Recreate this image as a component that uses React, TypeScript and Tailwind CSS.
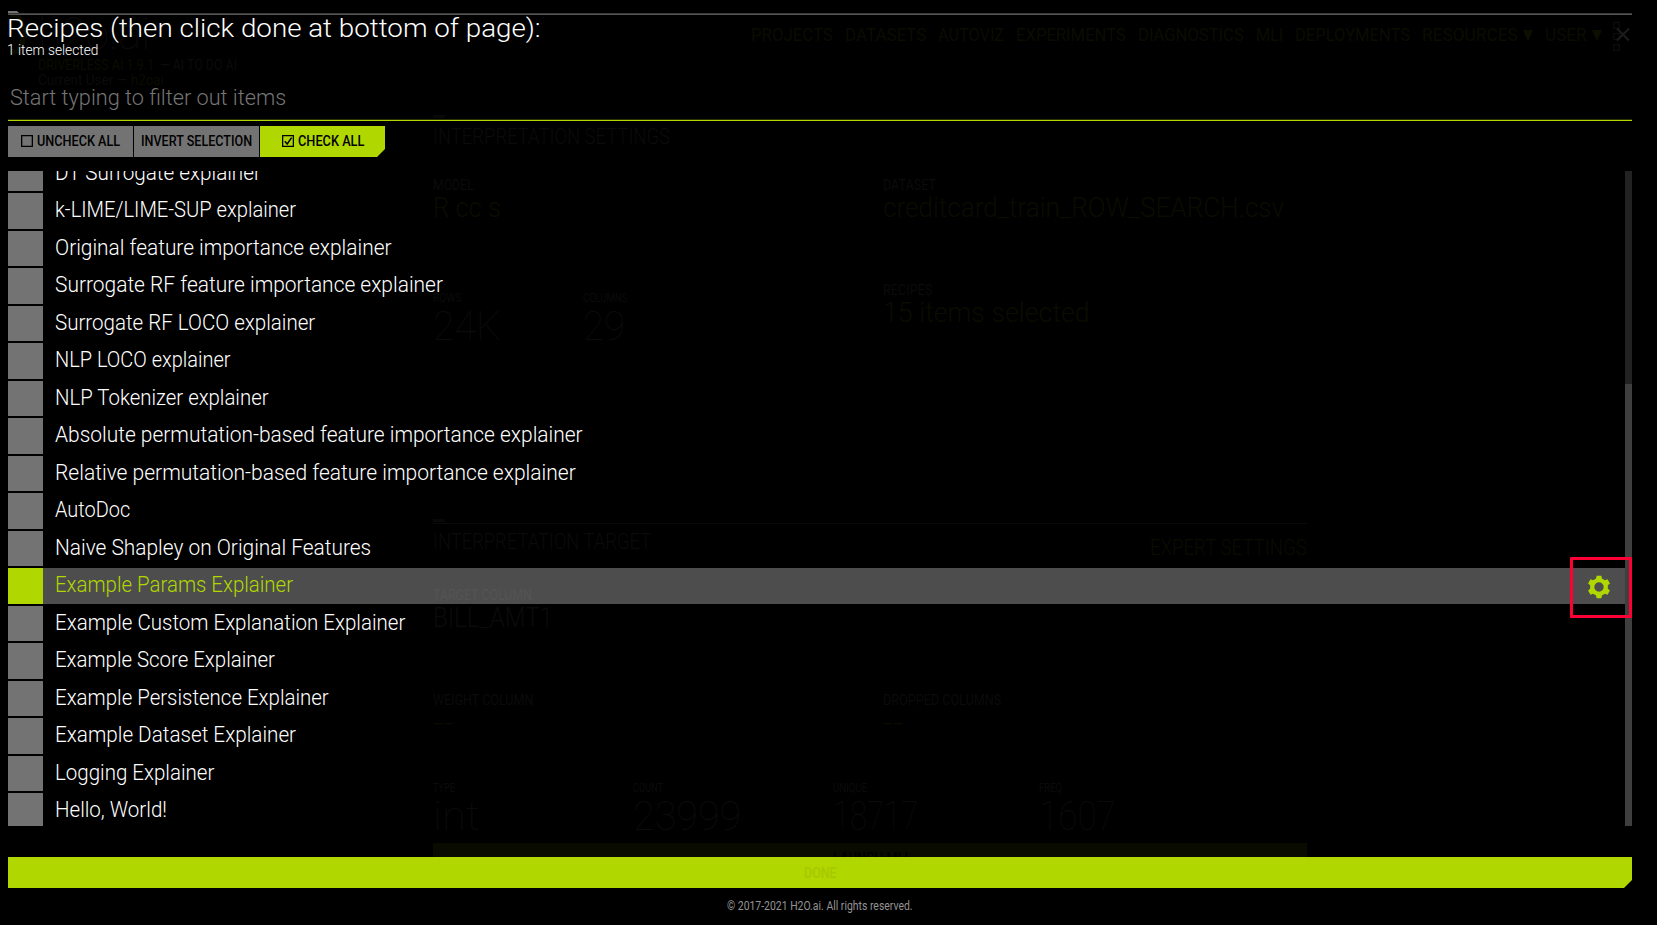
import { useLayoutEffect, useRef, useState } from "react";

/** One line of condensed text, squeezed or stretched horizontally to `w` pixels. */
function Line({ w, className = "", children }: { w: number; className?: string; children: string }) {
  const ref = useRef<HTMLSpanElement>(null);
  const [scale, setScale] = useState(1);
  useLayoutEffect(() => {
    const natural = ref.current?.offsetWidth ?? 0;
    if (natural > 0) setScale(w / natural);
  }, [w]);
  return (
    <div className={`shrink-0 whitespace-nowrap ${className}`} style={{ width: w }}>
      <span ref={ref} className="inline-block origin-left" style={{ transform: `scaleX(${scale})` }}>
        {children}
      </span>
    </div>
  );
}

const items: [string, number][] = [
  ["DT Surrogate explainer", 206],
  ["k-LIME/LIME-SUP explainer", 241],
  ["Original feature importance explainer", 336],
  ["Surrogate RF feature importance explainer", 388],
  ["Surrogate RF LOCO explainer", 260],
  ["NLP LOCO explainer", 176],
  ["NLP Tokenizer explainer", 214],
  ["Absolute permutation-based feature importance explainer", 528],
  ["Relative permutation-based feature importance explainer", 521],
  ["AutoDoc", 75],
  ["Naive Shapley on Original Features", 316],
  ["Example Params Explainer", 238],
  ["Example Custom Explanation Explainer", 350],
  ["Example Score Explainer", 220],
  ["Example Persistence Explainer", 274],
  ["Example Dataset Explainer", 241],
  ["Logging Explainer", 159],
  ["Hello, World!", 112],
];
const SELECTED = 11;

const nav: [string, number, boolean][] = [
  ["PROJECTS", 82, false],
  ["DATASETS", 81, false],
  ["AUTOVIZ", 66, false],
  ["EXPERIMENTS", 110, false],
  ["DIAGNOSTICS", 106, false],
  ["MLI", 27, false],
  ["DEPLOYMENTS", 115, false],
  ["RESOURCES", 96, true],
  ["USER", 42, true],
];

function Field({ label, lw, value, vw, plain }: { label: string; lw: number; value: string; vw: number; plain?: boolean }) {
  return (
    <div className="w-[450px] shrink-0">
      <Line w={lw} className="h-4 text-[14px] leading-4">{label}</Line>
      <Line
        w={vw}
        className={plain ? "h-8 text-[27px] font-light leading-[31px]" : "h-8 text-[27px] font-light leading-[31px] text-[#0b0c00]"}
      >
        {value}
      </Line>
    </div>
  );
}

function Stat({ label, lw, value, vw, className }: { label: string; lw: number; value: string; vw: number; className: string }) {
  return (
    <div className={`shrink-0 ${className}`}>
      <Line w={lw} className="h-4 text-[12px] leading-4">{label}</Line>
      <Line w={vw} className="h-12 text-[41px] font-thin leading-[40px]">{value}</Line>
    </div>
  );
}

function Backdrop() {
  return (
    <div className="absolute inset-0 overflow-hidden text-[#0b0b0b]">
      <div className="flex h-[115px] items-start justify-between">
        <div className="flex pl-2">
          <svg className="mt-[14px] h-10 w-[30px]" viewBox="0 0 30 40" fill="none" stroke="#0b0c00" strokeWidth="5">
            <path d="M2 1h8l8 18-8 19H2" />
          </svg>
          <div className="pt-3">
            <Line w={112} className="h-11 text-[44px] font-thin leading-[44px]">h2o.ai</Line>
            <div className="mt-px flex gap-1.5 text-[14px] leading-4">
              <Line w={116} className="text-[#0b0c00]">DRIVERLESS AI 1.9.1</Line>
              <Line w={77}>— AI TO DO AI</Line>
            </div>
            <div className="flex gap-1 text-[14px] leading-[15px]">
              <Line w={89}>Current User —</Line>
              <Line w={33} className="text-[#0b0c00]">h2oai</Line>
            </div>
          </div>
        </div>
        <div className="flex items-start gap-[12px] pr-[37px] pt-[22px] text-[18px] leading-[25px] text-[#0b0c00]">
          {nav.map(([label, w, menu]) => (
            <div key={label} className="flex items-center">
              <Line w={w}>{label}</Line>
              {menu && (
                <svg className="ml-[5px] mt-0.5 h-[11px] w-[10px]" viewBox="0 0 10 11" fill="#0d0e00">
                  <path d="M0 0h10L5 11z" />
                </svg>
              )}
            </div>
          ))}
          <svg className="-ml-[1px] h-[30px] w-[7px]" viewBox="0 0 7 30" fill="none" stroke="#0c0c0c" strokeWidth="1.3">
            <path d="M.7.7h5.6v5.6H.7zM.7 11.7h5.6v5.6H.7zM.7 22.7h5.6v5.6H.7z" />
          </svg>
        </div>
      </div>

      <div className="ml-[433px] w-[874px]">
        <div className="h-[3px] w-[12px] bg-[#080808]" />
        <Line w={237} className="mt-[6px] h-[26px] text-[21.5px] font-light leading-[26px]">INTERPRETATION SETTINGS</Line>
        <div className="mt-[27px] flex">
          <Field label="MODEL" lw={41} value="R cc s" vw={68} />
          <Field label="DATASET" lw={53} value="creditcard_train_ROW_SEARCH.csv" vw={401} />
        </div>
        <div className="mt-[57px] flex h-[48px]">
          <div className="flex w-[450px] shrink-0 pt-2">
            <Stat className="w-[150px]" label="ROWS" lw={28} value="24K" vw={68} />
            <Stat className="w-[150px]" label="COLUMNS" lw={44} value="29" vw={42} />
          </div>
          <Field label="RECIPES" lw={50} value="15 items selected" vw={207} />
        </div>
        <div className="mt-[189px] h-[3px] w-[12px] bg-[#080808]" />
        <div className="mt-px h-px bg-[#090909]" />
        <div className="flex h-[63px] justify-between pt-1">
          <Line w={218} className="h-[26px] pt-[1px] text-[21.5px] font-light leading-[26px]">INTERPRETATION TARGET</Line>
          <Line w={157} className="pt-[7px] text-[21.5px] font-light leading-[26px] text-[#0b0c00]">EXPERT SETTINGS</Line>
        </div>
        <Field label="TARGET COLUMN" lw={99} value="BILL_AMT1" vw={120} plain />
        <div className="mt-[57px] flex">
          <Field label="WEIGHT COLUMN" lw={100} value="--" vw={20} />
          <Field label="DROPPED COLUMNS" lw={118} value="--" vw={20} />
        </div>
        <div className="mt-[40px] flex h-[63px]">
          <Stat className="w-[200px]" label="TYPE" lw={22} value="int" vw={47} />
          <Stat className="w-[200px]" label="COUNT" lw={30} value="23999" vw={108} />
          <Stat className="w-[206px]" label="UNIQUE" lw={34} value="18717" vw={85} />
          <Stat className="w-[200px]" label="FREQ" lw={23} value="1607" vw={77} />
        </div>
        <div className="flex h-[31px] justify-center bg-[#0a0b00] pt-[6px] text-[14px] font-medium leading-[18px] text-black">
          <Line w={75}>LAUNCH MLI</Line>
        </div>
      </div>
    </div>
  );
}

function Gear() {
  const tooth = (a: number, r: number) => {
    const t = (a * Math.PI) / 180;
    return `${(12 + r * Math.sin(t)).toFixed(2)} ${(12 - r * Math.cos(t)).toFixed(2)}`;
  };
  const outline = [0, 60, 120, 180, 240, 300]
    .map((a) => `${tooth(a - 19, 9)} L${tooth(a - 12, 11.5)} L${tooth(a + 12, 11.5)} L${tooth(a + 19, 9)}`)
    .join(" L");
  return (
    <svg className="mt-0.5 h-6 w-6" viewBox="0 0 24 24" fill="#b1d700" fillRule="evenodd">
      <path d={`M${outline}Z M16.7 12a4.7 4.7 0 1 0-9.4 0a4.7 4.7 0 1 0 9.4 0Z`} />
    </svg>
  );
}

export default function App() {
  return (
    <div className="relative h-[925px] w-[1657px] overflow-hidden bg-black font-['Roboto',sans-serif]">
      <Backdrop />
      <div className="relative flex h-full flex-col pl-2 pr-[25px] pt-[11px]">
        <div className="h-0.5 w-[11px] bg-[#737373] [clip-path:polygon(0_0,82%_0,100%_100%,0_100%)]" />
        <div className="h-0.5 border-t border-[#3a3a3a] bg-[#555555]" />
        <div className="flex justify-between">
          <div>
            <Line w={534} className="-ml-px h-[25px] text-[26.5px] font-light leading-[25px] text-white">
              Recipes (then click done at bottom of page):
            </Line>
            <Line w={91} className="-ml-px h-5 text-[14px] font-light leading-5 text-white">1 item selected</Line>
          </div>
          <svg className="mr-[2px] mt-[13px] h-[13px] w-[14px]" viewBox="0 0 14 13" stroke="#1c1c1c" strokeWidth="2">
            <path d="M1 .5l12 12M13 .5l-12 12" />
          </svg>
        </div>
        <Line w={276} className="ml-[2px] mt-[23px] h-[29px] text-[22px] font-light leading-[30px] text-[#757575]">
          Start typing to filter out items
        </Line>
        <div className="mt-[7px] h-0.5 border-t border-[#2b3400] bg-[#b1d700]" />

        <div className="mt-[5px] flex h-[31px] gap-px text-[14.5px] font-medium leading-[31px] text-black">
          <button className="flex w-[125px] items-center gap-1 bg-[#737373] pl-[13px]">
            <svg className="-mt-0.5 h-3 w-3" viewBox="0 0 12 12" fill="none" stroke="black" strokeWidth="1.3">
              <path d="M.65.65h10.7v10.7H.65z" />
            </svg>
            <Line w={83}>UNCHECK ALL</Line>
          </button>
          <button className="flex w-[125px] justify-center bg-[#737373]">
            <Line w={111}>INVERT SELECTION</Line>
          </button>
          <button className="flex w-[125px] items-center gap-1 bg-[#b1d700] pl-[22px] [clip-path:polygon(0_0,100%_0,100%_calc(100%-8px),calc(100%-8px)_100%,0_100%)]">
            <svg className="-mt-0.5 h-3 w-3" viewBox="0 0 12 12" fill="none" stroke="black" strokeWidth="1.3">
              <path d="M.65.65h10.7v10.7H.65z" />
              <path d="M2.8 6.2l2.4 2.8L9.6 2.6" strokeWidth="1.5" />
            </svg>
            <Line w={66}>CHECK ALL</Line>
          </button>
        </div>

        <div className="mt-[14px] flex h-[655px]">
          <div className="h-full flex-1 overflow-hidden">
            <div className="-mt-[15.5px] flex flex-col gap-[2px]">
              {items.map(([label, w], i) => (
                <div key={label} className={i === SELECTED ? "flex h-[35.5px] bg-white/30" : "flex h-[35.5px]"}>
                  <div className={i === SELECTED ? "w-[34.5px] bg-[#b1d700]" : "w-[34.5px] bg-[#737373]"} />
                  <Line
                    w={w}
                    className={
                      i === SELECTED
                        ? "ml-[12.5px] text-[21.8px] font-light leading-[34px] text-[#b1d700]"
                        : "ml-[12.5px] text-[21.8px] font-light leading-[34px] text-white"
                    }
                  >
                    {label}
                  </Line>
                  {i === SELECTED && (
                    <div className="ml-auto flex items-center pr-[14px]">
                      <Gear />
                    </div>
                  )}
                </div>
              ))}
            </div>
          </div>
          <div className="flex w-[7px] flex-col bg-[#222222] pt-[213px]">
            <div className="flex-1 bg-[#3f3f3f]" />
          </div>
        </div>

        <div className="mt-[31px] flex h-[31px] items-center bg-[#b1d700] pl-[796px] [clip-path:polygon(0_0,100%_0,100%_calc(100%-8px),calc(100%-8px)_100%,0_100%)]">
          <Line w={33} className="text-[14px] font-medium leading-[30px] text-[#a5c900]">DONE</Line>
        </div>
        <div className="mt-[9px] flex pl-[719px]">
          <Line w={186} className="text-[12px] leading-[18px] text-[#949494]">© 2017-2021 H2O.ai. All rights reserved.</Line>
        </div>
      </div>
      <div className="pointer-events-none absolute left-[1570px] top-[557px] h-[61px] w-[62px] rounded-[1px] border-[3px] border-[#ff0035]" />
    </div>
  );
}
